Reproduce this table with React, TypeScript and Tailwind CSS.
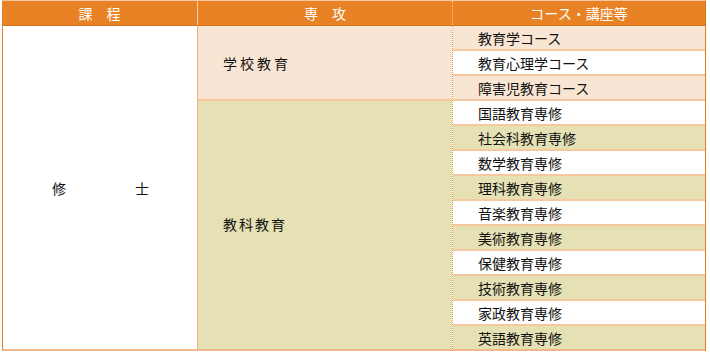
import React from "react";

const rows: { t: string; bg: string }[] = [
  { t: "教育学コース", bg: "bg-[#f9e5d3]" },
  { t: "教育心理学コース", bg: "bg-white" },
  { t: "障害児教育コース", bg: "bg-[#f9e5d3]" },
  { t: "国語教育専修", bg: "bg-white" },
  { t: "社会科教育専修", bg: "bg-[#e5e1b4]" },
  { t: "数学教育専修", bg: "bg-white" },
  { t: "理科教育専修", bg: "bg-[#e5e1b4]" },
  { t: "音楽教育専修", bg: "bg-white" },
  { t: "美術教育専修", bg: "bg-[#e5e1b4]" },
  { t: "保健教育専修", bg: "bg-white" },
  { t: "技術教育専修", bg: "bg-[#e5e1b4]" },
  { t: "家政教育専修", bg: "bg-white" },
  { t: "英語教育専修", bg: "bg-[#e5e1b4]" },
];

export default function App() {
  return (
    <div className="w-[710px] h-[353px] bg-white font-['Noto_Sans_CJK_JP',sans-serif] text-[14px] leading-none text-[#111]">
      <div className="ml-[2px] w-[704px]">
        {/* header */}
        <div className="flex h-[26px] border-t border-[#f3c7a0] border-b border-b-[#d9701a] bg-[#e98224] text-white">
          <div className="w-[196px] border-r border-[#f6cfa8] flex items-center justify-center">課　程</div>
          <div className="w-[255px] border-r border-dotted border-[#f6c89c] flex items-center justify-center">専　攻</div>
          <div className="flex-1 flex items-center justify-center border-r border-[#d9701a]">コース・講座等</div>
        </div>
        {/* body */}
        <div className="flex">
          <div className="w-[196px] h-[325px] border-l border-[#e98224] border-r border-r-[#efb482] border-b-2 border-b-[#eeb888] bg-white flex items-center justify-between pl-[49px] pr-[48px]">
            <span>修</span>
            <span>士</span>
          </div>
          <div className="w-[255px] flex flex-col border-r border-dotted border-[#f0963f]">
            <div className="h-[75px] bg-[#f9e5d3] border-b-2 border-[#f5c8a0] flex items-center pl-[25px] tracking-[3px]">
              学校教育
            </div>
            <div className="h-[250px] bg-[#e5e1b4] border-b-2 border-[#eeb888] flex items-center pl-[25px] pb-[3px] tracking-[2px]">
              教科教育
            </div>
          </div>
          <div className="flex-1 flex flex-col border-r border-[#e07f20]">
            {rows.map((r, i) => (
              <div
                key={i}
                className={`${r.bg} h-[25px] border-b-2 ${i === rows.length - 1 ? "border-[#eeb888]" : "border-[#f5c8a0]"} flex items-center pl-[25px]`}
              >
                {r.t}
              </div>
            ))}
          </div>
        </div>
      </div>
    </div>
  );
}
